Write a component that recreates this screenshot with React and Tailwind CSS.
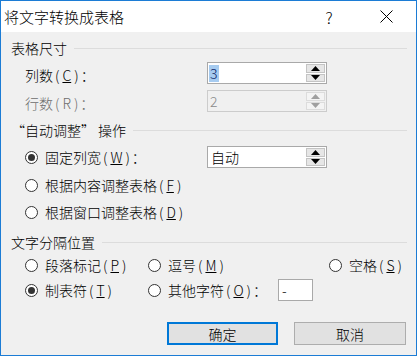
import React from 'react';

const FONT = "font-['Noto_Sans_CJK_SC','Noto_Sans',sans-serif]";

// mnemonic key in SimSun-like wide parentheses
function Key({ k, plain }) {
  return (
    <>
      <span className="px-[2px]">(</span>
      {plain ? <span className="px-[1px]">{k}</span> : <u className="px-[1px]">{k}</u>}
      <span className="px-[2px]">)</span>
    </>
  );
}

function Header({ children, className = '' }) {
  return (
    <div className={`h-[20px] flex items-center gap-[7px] text-[14px] text-black ${className}`}>
      <span className="leading-none whitespace-nowrap">{children}</span>
      <div className="flex-1 h-px bg-[#dcdcdc]" />
    </div>
  );
}

function Radio({ checked }) {
  return (
    <span className="w-[13px] h-[13px] shrink-0 rounded-full border border-[#333333] bg-white flex items-center justify-center">
      {checked && <span className="w-[7px] h-[7px] rounded-full bg-[#333333]" />}
    </span>
  );
}

function RadioItem({ checked, children, className = '' }) {
  return (
    <div className={`flex items-center gap-[7px] ${className}`}>
      <Radio checked={checked} />
      <span className="text-[14px] leading-none whitespace-nowrap">{children}</span>
    </div>
  );
}

function Arrow({ up, disabled }) {
  const color = disabled ? '#a0a0a0' : '#000000';
  return (
    <svg width="9" height="5" viewBox="0 0 9 5">
      {up ? <polygon points="0,5 9,5 4.5,0" fill={color} /> : <polygon points="0,0 9,0 4.5,5" fill={color} />}
    </svg>
  );
}

function SpinBtn({ up, disabled }) {
  return (
    <div className={`flex-1 flex items-center justify-center border ${disabled ? 'border-[#dcdcdc] bg-[#f4f4f4]' : 'border-[#c4c4c4] bg-[#e6e6e6]'}`}>
      <Arrow up={up} disabled={disabled} />
    </div>
  );
}

function Spin({ value, disabled, selected }) {
  return (
    <div className={`w-[120px] h-[22px] flex border ${disabled ? 'border-[#cccccc] bg-[#f0f0f0]' : 'border-[#a9a9a9] bg-white'}`}>
      <div className="flex-1 flex items-center pl-[1px]">
        <span className={`text-[14px] leading-[17px] px-px ${selected ? 'bg-[#a6cbf0] text-[#0a246a]' : disabled ? 'text-[#8a8a8a]' : 'text-black'}`}>
          {value}
        </span>
      </div>
      <div className="w-[20px] flex flex-col gap-px py-px pr-px">
        <SpinBtn up disabled={disabled} />
        <SpinBtn disabled={disabled} />
      </div>
    </div>
  );
}

function Button({ primary, children }) {
  return (
    <div className={`h-[23px] flex items-center justify-center bg-[#e1e1e1] text-[14px] leading-none ${primary ? 'w-[111px] border-2 border-[#0078d7]' : 'w-[112px] border border-[#adadad]'}`}>
      {children}
    </div>
  );
}

export default function App() {
  return (
    <div className={`${FONT} font-light w-[417px] h-[356px] border border-[#1c7cd5] bg-[#f0f0f0] flex flex-col text-black select-none`}>
      {/* Title bar */}
      <div className="h-[31px] bg-white flex items-center shrink-0">
        <span className="pl-[3px] text-[15px] leading-none flex-1">将文字转换成表格</span>
        <span className="text-[16px] leading-none w-[14px] mr-[44px] text-center">?</span>
        <svg width="13" height="13" viewBox="0 0 13 13" className="mr-[23px]">
          <path d="M0.5 0.5 L12.5 12.5 M12.5 0.5 L0.5 12.5" stroke="#000" strokeWidth="1" />
        </svg>
      </div>

      {/* Body */}
      <div className="flex flex-col pl-[10px] pr-[9px]">
        <Header className="mt-[6px]">表格尺寸</Header>

        <div className="mt-[4px] h-[22px] flex items-center pl-[14px]">
          <span className="w-[182px] text-[14px] leading-none pt-[4px]">列数<Key k="C" />：</span>
          <Spin value="3" selected />
        </div>
        <div className="mt-[6px] h-[22px] flex items-center pl-[14px]">
          <span className="w-[182px] text-[14px] leading-none pt-[4px] text-[#6d6d6d]">行数<Key k="R" plain />：</span>
          <Spin value="2" disabled />
        </div>

        <Header className="mt-[8px]">“自动调整” 操作</Header>

        <div className="mt-[6px] h-[22px] flex items-center pl-[14px]">
          <RadioItem checked className="w-[182px]">固定列宽<Key k="W" />：</RadioItem>
          <div className="w-[120px] h-[22px] flex border border-[#a9a9a9] bg-white">
            <div className="flex-1 flex items-center pl-[3px] text-[14px] leading-none">自动</div>
            <div className="w-[20px] flex flex-col gap-px py-px pr-px">
              <SpinBtn up />
              <SpinBtn />
            </div>
          </div>
        </div>
        <div className="mt-[6px] h-[22px] flex items-center pl-[14px]">
          <RadioItem>根据内容调整表格<Key k="F" /></RadioItem>
        </div>
        <div className="mt-[5px] h-[22px] flex items-center pl-[14px]">
          <RadioItem>根据窗口调整表格<Key k="D" /></RadioItem>
        </div>

        <Header className="mt-[9px]">文字分隔位置</Header>

        <div className="mt-[2px] h-[22px] flex items-center pl-[14px]">
          <RadioItem className="w-[123px]">段落标记<Key k="P" /></RadioItem>
          <RadioItem className="w-[181px]">逗号<Key k="M" /></RadioItem>
          <RadioItem>空格<Key k="S" /></RadioItem>
        </div>
        <div className="mt-[3px] h-[22px] flex items-center pl-[14px]">
          <RadioItem checked className="w-[123px]">制表符<Key k="T" /></RadioItem>
          <RadioItem className="w-[130px]">其他字符<Key k="O" />：</RadioItem>
          <div className="w-[35px] h-[22px] border border-[#a9a9a9] bg-white flex items-center pl-[3px] text-[14px] leading-none">-</div>
        </div>

        <div className="mt-[21px] flex items-center gap-[16px] pl-[156px]">
          <Button primary>确定</Button>
          <Button>取消</Button>
        </div>
      </div>
    </div>
  );
}
